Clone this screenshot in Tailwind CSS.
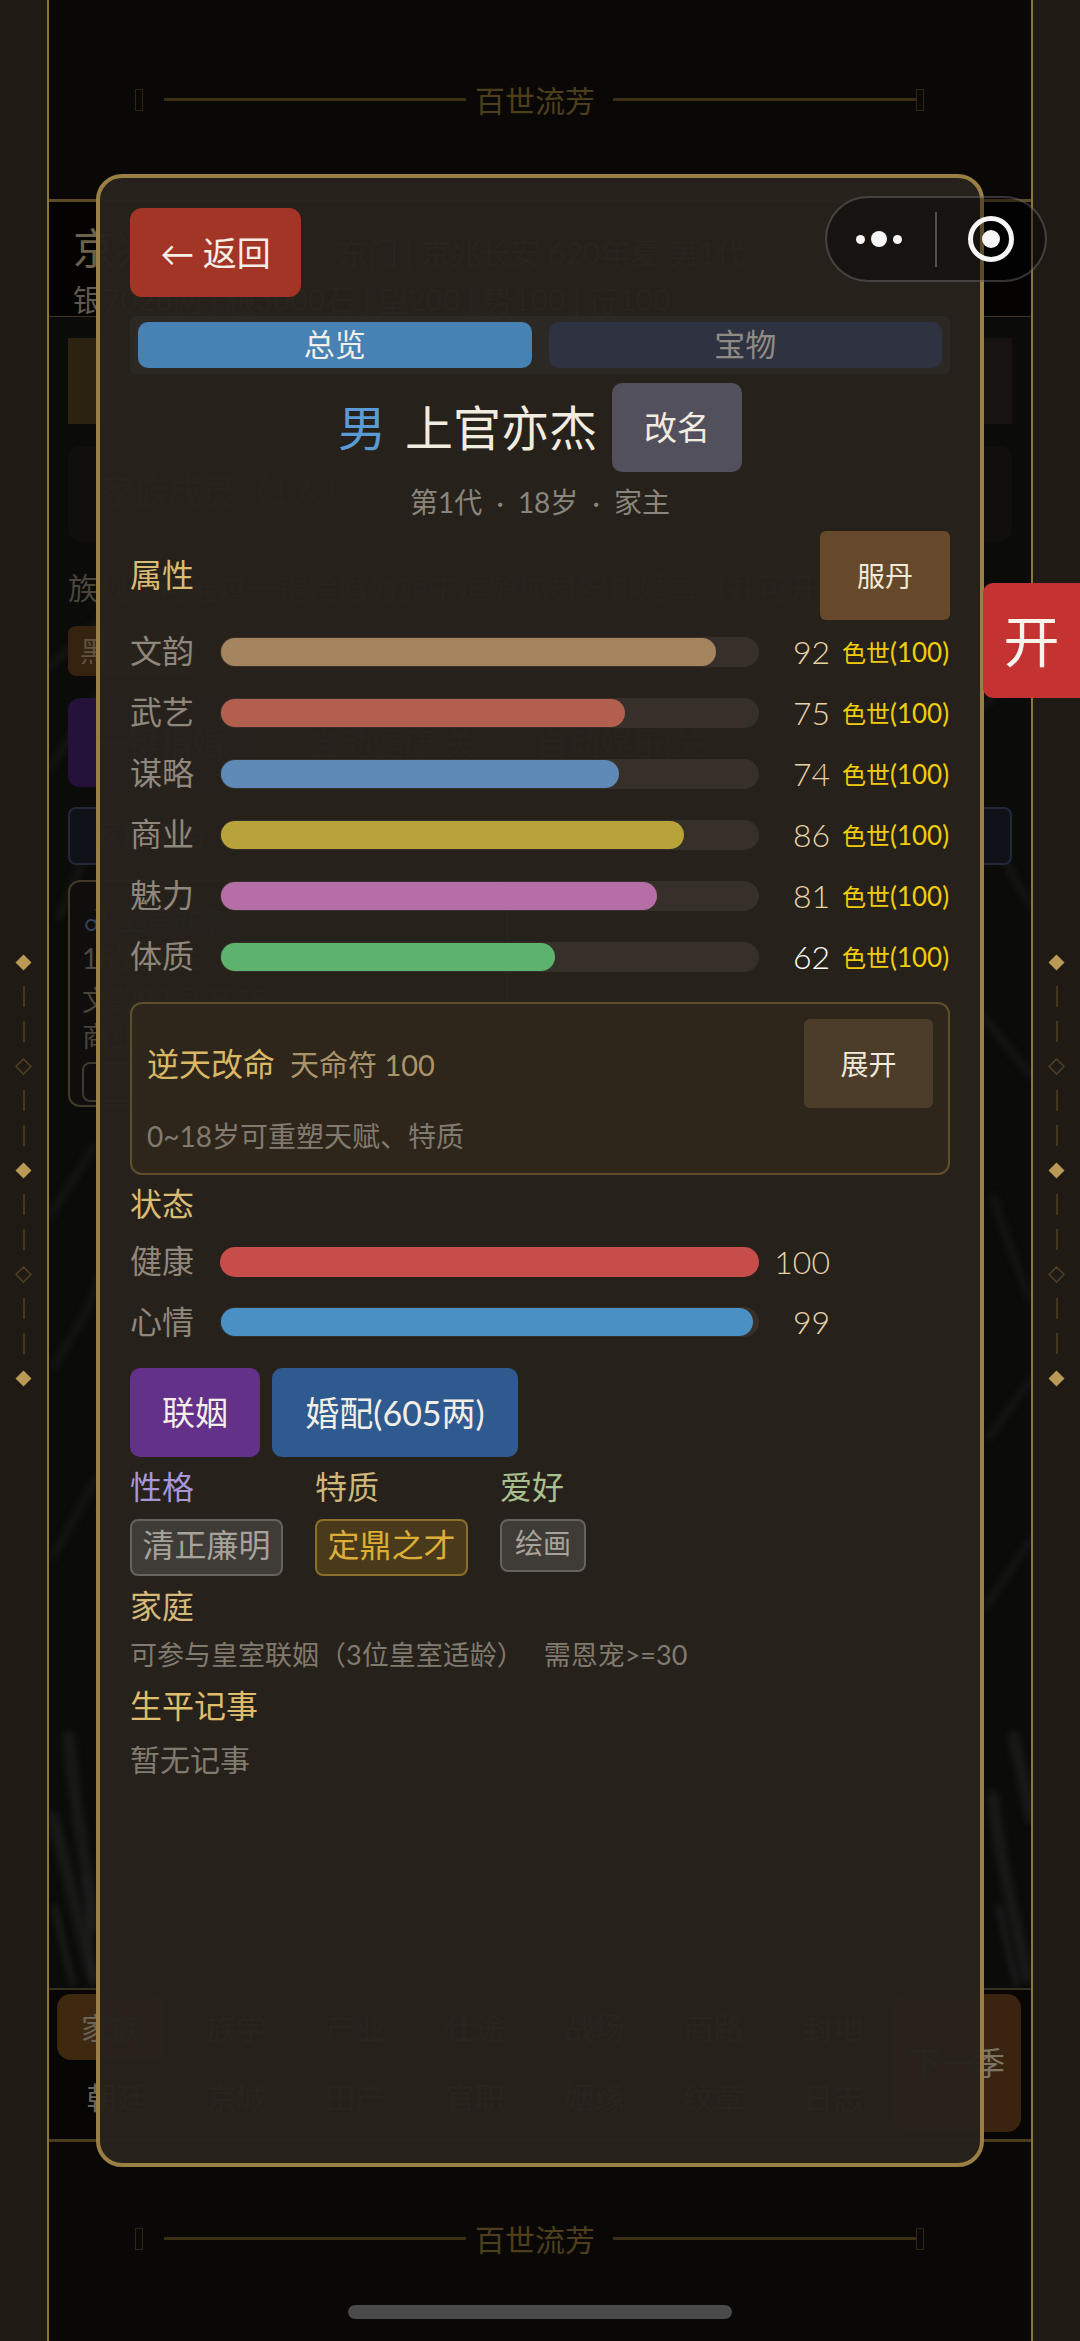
<!DOCTYPE html>
<html lang="zh">
<head>
<meta charset="utf-8">
<script src="https://cdn.jsdelivr.net/npm/@tailwindcss/browser@4"></script>
</head>
<body class="bg-[#0a0806]">
<div class="relative w-[1080px] h-[2341px] overflow-hidden flex font-['Lato','Noto_Sans_CJK_SC','Noto_Sans',sans-serif] font-normal">

  <!-- left rail -->
  <aside class="w-[47px] shrink-0 bg-[#1f1a14] flex flex-col items-center justify-center">
    <div class="w-[17px] h-[17px] flex items-center justify-center"><svg width="17" height="17" viewBox="0 0 17 17"><path d="M8.5 0.5 16.5 8.5 8.5 16.5 0.5 8.5Z" fill="#b89a55"/></svg></div>
    <div class="w-[2px] h-[21px] bg-[#43381f] mt-[15px]"></div><div class="w-[2px] h-[21px] bg-[#43381f] mt-[14px] mb-[16px]"></div>
    <div class="w-[17px] h-[17px] flex items-center justify-center"><svg width="17" height="17" viewBox="0 0 17 17"><path d="M8.5 1 16 8.5 8.5 16 1 8.5Z" fill="none" stroke="#4f4225" stroke-width="1.5"/></svg></div>
    <div class="w-[2px] h-[21px] bg-[#43381f] mt-[15px]"></div><div class="w-[2px] h-[21px] bg-[#43381f] mt-[14px] mb-[16px]"></div>
    <div class="w-[17px] h-[17px] flex items-center justify-center"><svg width="17" height="17" viewBox="0 0 17 17"><path d="M8.5 0.5 16.5 8.5 8.5 16.5 0.5 8.5Z" fill="#b89a55"/></svg></div>
    <div class="w-[2px] h-[21px] bg-[#43381f] mt-[15px]"></div><div class="w-[2px] h-[21px] bg-[#43381f] mt-[14px] mb-[16px]"></div>
    <div class="w-[17px] h-[17px] flex items-center justify-center"><svg width="17" height="17" viewBox="0 0 17 17"><path d="M8.5 1 16 8.5 8.5 16 1 8.5Z" fill="none" stroke="#4f4225" stroke-width="1.5"/></svg></div>
    <div class="w-[2px] h-[21px] bg-[#43381f] mt-[15px]"></div><div class="w-[2px] h-[21px] bg-[#43381f] mt-[14px] mb-[16px]"></div>
    <div class="w-[17px] h-[17px] flex items-center justify-center"><svg width="17" height="17" viewBox="0 0 17 17"><path d="M8.5 0.5 16.5 8.5 8.5 16.5 0.5 8.5Z" fill="#b89a55"/></svg></div>
  </aside>

  <!-- backdrop page -->
  <main class="w-[986px] shrink-0 border-x-2 border-[#8f7638] bg-[#0a0806] flex flex-col">
    <div class="h-[199px] shrink-0 flex items-center pl-[86px] text-[30px] leading-[40px] text-[#4d3f1c]">
      <span class="w-[8px] h-[22px] border border-[#2e2611] mr-[21px]"></span>
      <span class="w-[302px] h-[3px] bg-[#3a2f15] mr-[9px]"></span>
      <span class="mr-[18px]">百世流芳</span>
      <span class="w-[303px] h-[3px] bg-[#3a2f15]"></span>
      <span class="w-[8px] h-[22px] border border-[#2e2611]"></span>
    </div>
    <header class="h-[118px] shrink-0 border-t-[3px] border-b border-t-[#5c4c26] border-b-[#3c3423] bg-[#040302] pl-[24px] pt-[18px] text-[#6d614a]">
      <div class="text-[42px] leading-[56px] whitespace-nowrap">京兆 <span class="text-[30px] ml-[170px]">东门 | 京兆长安 620年夏 第1代</span></div>
      <div class="text-[30px] leading-[40px] text-[#5e5a50] whitespace-nowrap -mt-[1px]">银7026两 | 粮3000石 | 望200 | 势100 | 符100</div>
    </header>
    <section class="relative h-[1671px] shrink-0 bg-[#0b0b0a] px-[19px] overflow-hidden">
      <svg class="absolute inset-0 blur-[3px]" width="984" height="1671" viewBox="0 0 984 1671" fill="none" stroke-linecap="round">
        <g stroke="#151514" stroke-width="7">
          <path d="M0 350C20 330 40 320 60 290M2 450 48 380M10 600C30 560 40 520 50 500M0 900 45 830M5 1050C20 1020 40 1000 50 960M4 1240 48 1160"/>
          <path d="M980 330 935 390M940 500C950 540 970 570 984 590M934 700 984 760M945 880C955 920 970 950 980 980M940 1120 984 1060M936 1290 984 1220"/>
        </g>
        <g stroke="#191918" stroke-width="12">
          <path d="M4 1500C20 1560 30 1610 44 1660M20 1420C26 1500 40 1560 46 1610M944 1480C950 1540 966 1600 978 1660M965 1420 982 1500"/>
        </g>
        <g stroke="#232523" stroke-width="4">
          <path d="M6 1590C12 1620 20 1650 24 1668M36 1560C40 1600 42 1640 44 1668M950 1590C956 1620 962 1650 968 1668"/>
        </g>
      </svg>
      <div class="relative">
        <div class="mt-[21px] h-[86px] bg-[linear-gradient(90deg,#2e2310,#1a1610_20%,#171310)]"></div>
        <div class="mt-[22px] h-[95px] rounded-[12px] bg-[#100f0d] pl-[32px] text-[34px] leading-[90px] text-[#4a4338]">家族成员（1人）</div>
        <div class="mt-[24px] h-[44px] text-[30px] leading-[44px] text-[#4a4538] whitespace-nowrap">族规：可通过一键指婚为族中适龄成员安排婚事（并可开启自动）</div>
        <div class="mt-[17px] h-[50px] w-[130px] rounded-[8px] bg-[#35230f] pl-[12px] text-[28px] leading-[50px] text-[#5f5341]">黑市</div>
        <div class="mt-[22px] h-[89px] flex items-center gap-[60px] text-[32px] text-[#4a4338]">
          <div class="w-[180px] h-full rounded-[12px] bg-[#24123a] flex items-center pl-[28px] whitespace-nowrap">一键指婚</div>
          <span class="whitespace-nowrap">自动健康:关</span><span class="whitespace-nowrap">自动娱乐:关</span>
        </div>
        <div class="mt-[20px] h-[58px] rounded-[8px] border-2 border-[#232838] bg-[#10121a] pl-[24px] text-[28px] leading-[52px] text-[#4a4a4a]">家族事务</div>
        <div class="mt-[15px] w-[440px] h-[227px] rounded-[12px] border-2 border-[#423a28] bg-[#0f0e0c] pl-[12px] text-[28px] leading-[36px] text-[#4a4438]">
          <div class="mt-[20px] text-[#33415a]">&#9794; 上官亦杰</div>
          <div class="text-[#4f4a40] mt-[2px]">18岁 家主</div>
          <div class="mt-[6px]">文韵92 武艺75</div>
          <div>商业86</div>
          <div class="mt-[8px] w-[100px] h-[40px] rounded-[8px] border-2 border-[#3f3a2c]"></div>
        </div>
      </div>
    </section>
    <nav class="h-[151px] shrink-0 border-t-[2px] border-[#34301e] bg-[#080604] relative pl-[8px] pt-[4px] text-[30px] text-[#6b6558]">
      <div class="flex items-start">
        <div class="grid grid-cols-7 w-[836px] gap-y-[4px] text-center leading-[66px]">
          <div class="h-[66px] w-[108px] rounded-[14px] bg-[#3f2810]">家族</div><div>族学</div><div>产业</div><div>仕途</div><div>战场</div><div>商路</div><div>封地</div>
          <div>朝廷</div><div>京城</div><div>田产</div><div>官职</div><div>姻缘</div><div>纹章</div><div>日志</div>
        </div>
        <div class="w-[128px] h-[138px] rounded-[14px] bg-[#3a2410] flex items-center justify-center text-[32px] text-[#7d7566]">下一季</div>
      </div>
    </nav>
    <div class="flex-1 border-t-[3px] border-[#4a3c1a] bg-[#0a0806] flex items-center pl-[86px] pb-[6px] text-[30px] leading-[40px] text-[#4d3f1c]">
      <span class="w-[8px] h-[22px] border border-[#2e2611] mr-[21px]"></span>
      <span class="w-[302px] h-[3px] bg-[#3a2f15] mr-[9px]"></span>
      <span class="mr-[18px]">百世流芳</span>
      <span class="w-[303px] h-[3px] bg-[#3a2f15]"></span>
      <span class="w-[8px] h-[22px] border border-[#2e2611]"></span>
    </div>
  </main>

  <!-- right rail -->
  <aside class="w-[47px] shrink-0 bg-[#1f1a14] flex flex-col items-center justify-center">
    <div class="w-[17px] h-[17px] flex items-center justify-center"><svg width="17" height="17" viewBox="0 0 17 17"><path d="M8.5 0.5 16.5 8.5 8.5 16.5 0.5 8.5Z" fill="#b89a55"/></svg></div>
    <div class="w-[2px] h-[21px] bg-[#43381f] mt-[15px]"></div><div class="w-[2px] h-[21px] bg-[#43381f] mt-[14px] mb-[16px]"></div>
    <div class="w-[17px] h-[17px] flex items-center justify-center"><svg width="17" height="17" viewBox="0 0 17 17"><path d="M8.5 1 16 8.5 8.5 16 1 8.5Z" fill="none" stroke="#4f4225" stroke-width="1.5"/></svg></div>
    <div class="w-[2px] h-[21px] bg-[#43381f] mt-[15px]"></div><div class="w-[2px] h-[21px] bg-[#43381f] mt-[14px] mb-[16px]"></div>
    <div class="w-[17px] h-[17px] flex items-center justify-center"><svg width="17" height="17" viewBox="0 0 17 17"><path d="M8.5 0.5 16.5 8.5 8.5 16.5 0.5 8.5Z" fill="#b89a55"/></svg></div>
    <div class="w-[2px] h-[21px] bg-[#43381f] mt-[15px]"></div><div class="w-[2px] h-[21px] bg-[#43381f] mt-[14px] mb-[16px]"></div>
    <div class="w-[17px] h-[17px] flex items-center justify-center"><svg width="17" height="17" viewBox="0 0 17 17"><path d="M8.5 1 16 8.5 8.5 16 1 8.5Z" fill="none" stroke="#4f4225" stroke-width="1.5"/></svg></div>
    <div class="w-[2px] h-[21px] bg-[#43381f] mt-[15px]"></div><div class="w-[2px] h-[21px] bg-[#43381f] mt-[14px] mb-[16px]"></div>
    <div class="w-[17px] h-[17px] flex items-center justify-center"><svg width="17" height="17" viewBox="0 0 17 17"><path d="M8.5 0.5 16.5 8.5 8.5 16.5 0.5 8.5Z" fill="#b89a55"/></svg></div>
  </aside>

  <!-- modal panel -->
  <div class="absolute left-[96px] top-[174px] w-[888px] h-[1993px] rounded-[26px] border-4 border-[#9a7f45] bg-[#27221c]/97 px-[30px] pt-[30px] text-[32px] text-[#8f877b]">
    <button class="block w-[171px] h-[89px] rounded-[12px] bg-[#a33527] text-[34px] text-[#f4efe6]">← 返回</button>

    <div class="mt-[19px] h-[58px] rounded-[6px] bg-[#2c2823] px-[8px] py-[6px] flex gap-[17px] text-[31px] leading-[45px] text-center">
      <div class="flex-1 rounded-[10px] bg-[#4682b4] text-[#f2efe8]">总览</div>
      <div class="flex-1 rounded-[10px] bg-[#2f3240] text-[#8f8b84]">宝物</div>
    </div>

    <div class="mt-[9px] flex items-center justify-center h-[89px]">
      <span class="text-[48px] leading-[60px] text-[#5b9bd5]">男</span>
      <span class="ml-[19px] text-[48px] leading-[60px] text-[#f2ece0]">上官亦杰</span>
      <button class="ml-[15px] w-[130px] h-[89px] rounded-[10px] bg-[#52505c] text-[33px] text-[#f2ece0]">改名</button>
    </div>

    <div class="mt-[10px] text-center text-[28px] leading-[40px] text-[#8a857c]">第1代<span class="mx-[7px]"> · </span>18岁<span class="mx-[7px]"> · </span>家主</div>

    <div class="mt-[9px] flex items-center justify-between h-[89px]">
      <span class="leading-[40px] pb-[2px] text-[#d9bc73]">属性</span>
      <button class="w-[130px] h-[89px] rounded-[6px] bg-[#66492a] text-[28px] text-[#f0e9dc]">服丹</button>
    </div>

    <div class="mt-[17px] flex flex-col gap-[31px]">
      <div class="flex items-center h-[30px]">
        <span class="w-[90px] leading-[30px] pb-[2px]">文韵</span>
        <div class="w-[539px] h-[30px] rounded-full bg-[#37302a] p-[1px]"><div class="h-full rounded-full bg-[#a58560] w-[495px]"></div></div>
        <span class="w-[71px] text-right font-light text-[#e6d2a8] leading-[30px]">92</span>
        <span class="ml-[12px] w-[108px] text-[24px] leading-[30px] text-[#f0cc0c] whitespace-nowrap">色世<span class="text-[26px]">(100)</span></span>
      </div>
      <div class="flex items-center h-[30px]">
        <span class="w-[90px] leading-[30px] pb-[2px]">武艺</span>
        <div class="w-[539px] h-[30px] rounded-full bg-[#37302a] p-[1px]"><div class="h-full rounded-full bg-[#b35f4e] w-[404px]"></div></div>
        <span class="w-[71px] text-right font-light text-[#e6d2a8] leading-[30px]">75</span>
        <span class="ml-[12px] w-[108px] text-[24px] leading-[30px] text-[#f0cc0c] whitespace-nowrap">色世<span class="text-[26px]">(100)</span></span>
      </div>
      <div class="flex items-center h-[30px]">
        <span class="w-[90px] leading-[30px] pb-[2px]">谋略</span>
        <div class="w-[539px] h-[30px] rounded-full bg-[#37302a] p-[1px]"><div class="h-full rounded-full bg-[#5f8ab8] w-[398px]"></div></div>
        <span class="w-[71px] text-right font-light text-[#e6d2a8] leading-[30px]">74</span>
        <span class="ml-[12px] w-[108px] text-[24px] leading-[30px] text-[#f0cc0c] whitespace-nowrap">色世<span class="text-[26px]">(100)</span></span>
      </div>
      <div class="flex items-center h-[30px]">
        <span class="w-[90px] leading-[30px] pb-[2px]">商业</span>
        <div class="w-[539px] h-[30px] rounded-full bg-[#37302a] p-[1px]"><div class="h-full rounded-full bg-[#b8a23a] w-[463px]"></div></div>
        <span class="w-[71px] text-right font-light text-[#e6d2a8] leading-[30px]">86</span>
        <span class="ml-[12px] w-[108px] text-[24px] leading-[30px] text-[#f0cc0c] whitespace-nowrap">色世<span class="text-[26px]">(100)</span></span>
      </div>
      <div class="flex items-center h-[30px]">
        <span class="w-[90px] leading-[30px] pb-[2px]">魅力</span>
        <div class="w-[539px] h-[30px] rounded-full bg-[#37302a] p-[1px]"><div class="h-full rounded-full bg-[#b56fa6] w-[436px]"></div></div>
        <span class="w-[71px] text-right font-light text-[#e6d2a8] leading-[30px]">81</span>
        <span class="ml-[12px] w-[108px] text-[24px] leading-[30px] text-[#f0cc0c] whitespace-nowrap">色世<span class="text-[26px]">(100)</span></span>
      </div>
      <div class="flex items-center h-[30px]">
        <span class="w-[90px] leading-[30px] pb-[2px]">体质</span>
        <div class="w-[539px] h-[30px] rounded-full bg-[#37302a] p-[1px]"><div class="h-full rounded-full bg-[#5db36e] w-[334px]"></div></div>
        <span class="w-[71px] text-right font-light text-[#ffffff] leading-[30px]">62</span>
        <span class="ml-[12px] w-[108px] text-[24px] leading-[30px] text-[#f0cc0c] whitespace-nowrap">色世<span class="text-[26px]">(100)</span></span>
      </div>
    </div>

    <div class="mt-[30px] h-[173px] rounded-[12px] border-2 border-[#5e4e2c] bg-[#2e261b] px-[15px] pt-[15px]">
      <div class="flex items-center justify-between h-[89px]">
        <div class="flex items-baseline gap-[15px]">
          <span class="text-[#d8b765]">逆天改命</span>
          <span class="text-[29px] text-[#a8936a]">天命符 100</span>
        </div>
        <button class="w-[129px] h-[89px] rounded-[6px] bg-[#4b3d2a] text-[28px] text-[#f0e9dc]">展开</button>
      </div>
      <div class="mt-[8px] text-[28px] leading-[40px] text-[#817a6e]">0~18岁可重塑天赋、特质</div>
    </div>

    <div class="mt-[7px] h-[44px] leading-[44px] text-[#d9bc73]">状态</div>
    <div class="mt-[21px] flex flex-col gap-[30px]">
      <div class="flex items-center h-[30px]">
        <span class="w-[90px] leading-[30px] pb-[2px]">健康</span>
        <div class="w-[539px] h-[30px] rounded-full bg-[#c74d4a]"></div>
        <span class="w-[71px] text-right font-light text-[#e6d2a8] leading-[30px]">100</span>
      </div>
      <div class="flex items-center h-[30px]">
        <span class="w-[90px] leading-[30px]">心情</span>
        <div class="w-[539px] h-[30px] rounded-full bg-[#37302a] p-[1px]"><div class="h-full rounded-full bg-[#4a90c4] w-[532px]"></div></div>
        <span class="w-[71px] text-right font-light text-[#e6d2a8] leading-[30px]">99</span>
      </div>
    </div>

    <div class="mt-[31px] flex gap-[12px]">
      <button class="w-[130px] h-[89px] rounded-[10px] bg-[#63308a] text-[33px] text-[#f4efe6]">联姻</button>
      <button class="w-[246px] h-[89px] rounded-[10px] bg-[#2f5a8f] text-[34px] text-[#f4efe6]">婚配(605两)</button>
    </div>

    <div class="mt-[9px] flex items-start gap-[32px]">
      <div class="w-[153px]">
        <div class="h-[44px] leading-[41px] text-[#a896d8]">性格</div>
        <div class="mt-[9px] h-[57px] rounded-[8px] border-2 border-[#66625d] bg-[#3f3c38] text-center leading-[48px] text-[#a8a39a] whitespace-nowrap">清正廉明</div>
      </div>
      <div class="w-[153px]">
        <div class="h-[44px] leading-[41px] text-[#cfb87a]">特质</div>
        <div class="mt-[9px] h-[57px] rounded-[8px] border-2 border-[#8a6f2a] bg-[#4a3a1c] text-center leading-[48px] text-[#dcae36] whitespace-nowrap">定鼎之才</div>
      </div>
      <div class="w-[86px]">
        <div class="h-[44px] leading-[41px] text-[#a8c090] whitespace-nowrap">爱好</div>
        <div class="mt-[9px] h-[53px] rounded-[8px] border-2 border-[#66625d] bg-[#3f3c38] text-center text-[28px] leading-[45px] text-[#a8a39a] whitespace-nowrap">绘画</div>
      </div>
    </div>

    <div class="mt-[8px] h-[44px] leading-[44px] text-[#d4b87a]">家庭</div>
    <div class="mt-[7px] h-[40px] text-[27px] leading-[40px] text-[#817a6e] whitespace-nowrap">可参与皇室联姻（3位皇室适龄）<span class="ml-[20px]">需恩宠&gt;=30</span></div>
    <div class="mt-[9px] h-[44px] leading-[44px] text-[#e0bd6c]">生平记事</div>
    <div class="mt-[11px] h-[40px] text-[30px] leading-[40px] text-[#817a6e]">暂无记事</div>
  </div>

  <!-- side tab -->
  <div class="absolute left-[983px] top-[583px] w-[97px] h-[115px] rounded-l-[10px] bg-[#c43232] flex items-center justify-center text-[56px] text-[#f8f4ec]">开</div>

  <!-- mini-program capsule -->
  <div class="absolute left-[825px] top-[196px] w-[222px] h-[86px] rounded-full border-2 border-white/20 bg-black/40 flex items-center">
    <div class="w-[108px] flex items-center justify-center gap-[6px] pr-[4px]">
      <span class="w-[9px] h-[9px] rounded-full bg-[#f6f6f6]"></span>
      <span class="w-[16px] h-[16px] rounded-full bg-[#f6f6f6]"></span>
      <span class="w-[9px] h-[9px] rounded-full bg-[#f6f6f6]"></span>
    </div>
    <div class="w-[2px] h-[55px] bg-white/25"></div>
    <div class="flex-1 flex items-center justify-center">
      <span class="w-[46px] h-[46px] rounded-full border-[5px] border-[#f6f6f6] flex items-center justify-center"><span class="w-[18px] h-[18px] rounded-full bg-[#f6f6f6]"></span></span>
    </div>
  </div>

  <!-- home indicator -->
  <div class="absolute left-[348px] top-[2305px] w-[384px] h-[14px] rounded-full bg-[#4a4a4a]"></div>
</div>
</body>
</html>
